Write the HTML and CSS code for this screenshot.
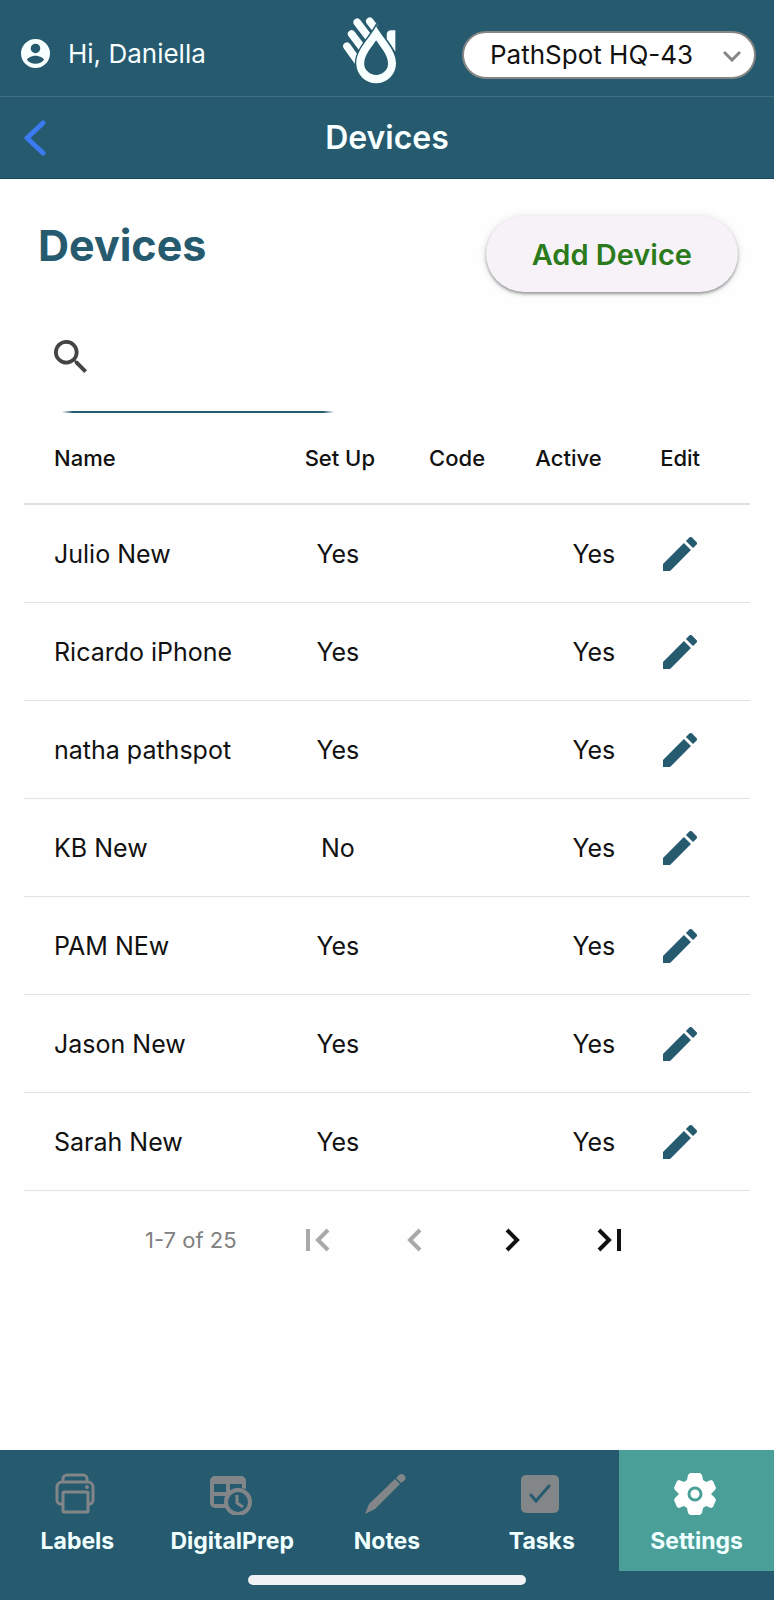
FILE: index.html
```html
<!DOCTYPE html>
<html lang="en">
<head>
<meta charset="utf-8">
<meta name="viewport" content="width=device-width, initial-scale=1">
<title>Devices</title>
<link rel="stylesheet" href="styles.css">
</head>
<body>
<svg class="defs" aria-hidden="true">
  <symbol id="pencil" viewBox="3 3 18 18">
    <path d="M3 17.25V21h3.75L17.81 9.94l-3.75-3.75L3 17.25zM20.71 7.04a1 1 0 0 0 0-1.41l-2.34-2.34a1 1 0 0 0-1.41 0l-1.83 1.83 3.75 3.75 1.83-1.83z"/>
  </symbol>
</svg>
<header class="top">
  <div class="topbar">
    <div class="user">
      <svg class="avatar" viewBox="2 2 20 20" aria-hidden="true"><path d="M12 2a10 10 0 1 0 0 20 10 10 0 0 0 0-20zm0 3.2a3.3 3.3 0 1 1 0 6.6 3.3 3.3 0 0 1 0-6.600zm0 13.900c-2.400 0-4.600-1.100-5.900-2.800.7-1.600 3.800-2.700 5.900-2.700s5.200 1.100 5.900 2.700c-1.300 1.700-3.500 2.800-5.900 2.800z"/></svg>
      <span>Hi, Daniella</span>
    </div>
    <svg class="logo" viewBox="38 37 160 200" role="img" aria-label="PathSpot">
      <g class="fingers">
        <path d="M81 52L116 98M119 49L132 66M64 87L98 132M50 124L84 172"/>
      </g>
      <path class="fill" d="M170 90q0-14 14-14h12v65q-10-16-26-38z"/>
      <path class="cut" d="M138 64C158 100 198 135 198 176a60 60 0 0 1-120 0C78 135 118 100 138 64z"/>
      <path class="fill" fill-rule="evenodd" d="M138 64C158 100 198 135 198 176a60 60 0 0 1-120 0C78 135 118 100 138 64zM138 106C124 128 102 150 102 176a36 35 0 0 0 72 0C174 150 152 128 138 106z"/>
    </svg>
    <div class="site">
      <select class="site-select" aria-label="Location"><option>PathSpot HQ-43</option></select>
      <svg class="site-arrow" viewBox="0 0 18 12" aria-hidden="true"><path d="M1 2l8 8 8-8"/></svg>
    </div>
  </div>
  <div class="titlebar">
    <button class="back" type="button" aria-label="Back"><svg viewBox="0 0 22 36" aria-hidden="true"><path d="M19 3L3 18l16 15"/></svg></button>
    <span class="title">Devices</span>
  </div>
</header>
<main class="main">
  <div class="heading">
    <h1>Devices</h1>
    <button class="add" type="button">Add Device</button>
  </div>
  <label class="search">
    <svg viewBox="3 3 18 18" aria-hidden="true"><path d="M15.500 14h-.79l-.28-.27A6.500 6.500 0 1 0 13.730 14.430l.27.28v.79l5 4.990L20.490 19l-4.990-5zm-6 0a4.500 4.500 0 1 1 0-9 4.500 4.500 0 0 1 0 9z"/></svg>
    <input type="text" aria-label="Search devices">
  </label>
  <table class="devices">
    <colgroup><col class="c-name"><col class="c-setup"><col class="c-code"><col class="c-active"><col class="c-edit"></colgroup>
    <thead>
      <tr><th class="name">Name</th><th>Set Up</th><th class="code">Code</th><th>Active</th><th class="edit">Edit</th></tr>
    </thead>
    <tbody>
      <tr><td class="name">Julio New</td><td class="setup">Yes</td><td></td><td class="active">Yes</td><td class="edit"><button type="button" aria-label="Edit Julio New"><svg><use href="#pencil"/></svg></button></td></tr>
      <tr><td class="name">Ricardo iPhone</td><td class="setup">Yes</td><td></td><td class="active">Yes</td><td class="edit"><button type="button" aria-label="Edit Ricardo iPhone"><svg><use href="#pencil"/></svg></button></td></tr>
      <tr><td class="name">natha pathspot</td><td class="setup">Yes</td><td></td><td class="active">Yes</td><td class="edit"><button type="button" aria-label="Edit natha pathspot"><svg><use href="#pencil"/></svg></button></td></tr>
      <tr><td class="name">KB New</td><td class="setup">No</td><td></td><td class="active">Yes</td><td class="edit"><button type="button" aria-label="Edit KB New"><svg><use href="#pencil"/></svg></button></td></tr>
      <tr><td class="name">PAM NEw</td><td class="setup">Yes</td><td></td><td class="active">Yes</td><td class="edit"><button type="button" aria-label="Edit PAM NEw"><svg><use href="#pencil"/></svg></button></td></tr>
      <tr><td class="name">Jason New</td><td class="setup">Yes</td><td></td><td class="active">Yes</td><td class="edit"><button type="button" aria-label="Edit Jason New"><svg><use href="#pencil"/></svg></button></td></tr>
      <tr><td class="name">Sarah New</td><td class="setup">Yes</td><td></td><td class="active">Yes</td><td class="edit"><button type="button" aria-label="Edit Sarah New"><svg><use href="#pencil"/></svg></button></td></tr>
    </tbody>
  </table>
  <div class="pager">
    <span class="range">1-7 of 25</span>
    <div class="pages">
      <button type="button" disabled aria-label="First page"><svg viewBox="0 0 24 24"><path d="M2 1v22M22 2L12 12l10 10"/></svg></button>
      <button type="button" disabled aria-label="Previous page"><svg viewBox="0 0 24 24"><path d="M17 2L7 12l10 10"/></svg></button>
      <button type="button" aria-label="Next page"><svg viewBox="0 0 24 24"><path d="M7 2l10 10L7 22"/></svg></button>
      <button type="button" aria-label="Last page"><svg viewBox="0 0 24 24"><path d="M2 2l10 10L2 22M22 1v22"/></svg></button>
    </div>
  </div>
</main>
<footer class="footer">
  <nav class="tabs">
    <a class="tab" href="#labels">
      <svg viewBox="0 0 42 42" aria-hidden="true"><g class="line"><path d="M8 31H6a4 4 0 0 1-4-4V14a5 5 0 0 1 5-5h26a5 5 0 0 1 5 5v13a4 4 0 0 1-4 4h-1M8 8V6a4 4 0 0 1 4-4h16a4 4 0 0 1 4 4v2"/><rect x="8" y="19" width="25" height="20" rx="1"/></g><circle cx="32" cy="14" r="2"/></svg>
      <span>Labels</span>
    </a>
    <a class="tab" href="#prep">
      <svg viewBox="0 0 42 42" aria-hidden="true"><path fill-rule="evenodd" d="M5 3h26a5 5 0 0 1 5 5v8a13 13 0 0 0-15 19H5a5 5 0 0 1-5-5V8a5 5 0 0 1 5-5zM4 11v8h12v-8zM20 11v8h1q4-5 11-4v-4zM4 23v8h11q0-4 1-8z"/><circle class="clock" cx="28" cy="29" r="12"/><path class="line" d="M27 22v8l6 4"/></svg>
      <span>DigitalPrep</span>
    </a>
    <a class="tab" href="#notes">
      <svg viewBox="0 0 42 42" aria-hidden="true"><path d="M1 41l4-10L31 6l5 5L11 36zM32 5l3-3a4 4 0 0 1 6 5l-4 3z"/></svg>
      <span>Notes</span>
    </a>
    <a class="tab" href="#tasks">
      <svg viewBox="0 0 42 42" aria-hidden="true"><rect x="2" y="2" width="38" height="38" rx="5"/><path class="tick" d="M12 22l5 6 13-15"/></svg>
      <span>Tasks</span>
    </a>
    <a class="tab current" href="#settings" aria-current="page">
      <svg viewBox="0 0 42 42" aria-hidden="true"><path d="M16 0h10l2 2 1 5 3 2 5-2 2 1 3 7-1 2-4 4 4 4 1 2-3 7-2 1-5-2-3 2-1 5-2 2H16l-2-2-1-5-3-2-5 2-2-1-3-7 1-2 4-4-4-4-1-2 3-7 2-1 5 2 3-2 1-5z"/><circle class="hub" cx="21" cy="21" r="6"/></svg>
      <span>Settings</span>
    </a>
  </nav>
  <div class="home"></div>
</footer>
</body>
</html>
```
FILE: styles.css
```css
* { box-sizing: border-box; }
body {
  margin: 0;
  min-height: 100vh;
  display: flex;
  flex-direction: column;
  background: #fefefe;
  color: #111;
  font-family: Inter, "Liberation Sans", sans-serif;
  font-size: 26px;
}
button { border: 0; padding: 0; background: none; font: inherit; color: inherit; }
svg { display: block; fill: currentColor; }
.defs { position: absolute; width: 0; height: 0; }

.top { background: #265a6e; color: #f7ffff; }
.topbar {
  display: flex;
  align-items: center;
  height: 97px;
  padding: 5px 18px 0 21px;
  border-bottom: 1px solid #3f7083;
}
.user { display: flex; align-items: center; gap: 18px; flex: 1; padding-top: 6px; }
.avatar { width: 29px; height: 29px; }
.logo { width: 53px; height: 67px; margin-right: 66px; }
.fill { fill: #f7ffff; }
.cut { fill: #265a6e; stroke: #265a6e; stroke-width: 9; }
.fingers { fill: none; stroke: #f7ffff; stroke-width: 23; stroke-linecap: round; }
.site { position: relative; width: 40%; max-width: 294px; margin-top: 8px; }
.site-select {
  display: block;
  appearance: none;
  width: 100%;
  height: 48px;
  padding: 0 48px 0 26px;
  border: 2px solid #858585;
  border-radius: 24px;
  background: #fff;
  color: #111;
  font: inherit;
}
.site-arrow {
  position: absolute;
  right: 15px;
  top: 19px;
  width: 18px;
  height: 12px;
  fill: none;
  stroke: #858585;
  stroke-width: 3;
  pointer-events: none;
}
.titlebar {
  display: grid;
  grid-template-columns: 1fr auto 1fr;
  align-items: center;
  height: 82px;
  padding: 0 24px;
  border-bottom: 1px solid #17495c;
}
.back { justify-self: start; }
.back svg { width: 22px; height: 36px; fill: none; stroke: #3b7af0; stroke-width: 5; stroke-linecap: round; stroke-linejoin: round; }
.title { font-size: 32px; font-weight: 600; }

.main { flex: 1; padding: 37px 24px 0; }
.heading { display: flex; justify-content: space-between; padding: 0 12px 0 14px; }
h1 { margin: 0; color: #265a6e; font-size: 43px; line-height: 58px; font-weight: 700; }
.add {
  height: 76px;
  padding: 0 46px;
  border-radius: 38px;
  background: #f6f2f8;
  box-shadow: 0 2px 3px rgba(0, 0, 0, .35), 0 1px 8px rgba(0, 0, 0, .12);
  color: #2b7a1b;
  font-size: 29px;
  font-weight: 600;
}
.search {
  display: block;
  width: 272px;
  margin: 48px 0 0 30px;
}
.search svg { width: 34px; height: 34px; color: #444; }
.search input {
  display: block;
  width: 100%;
  height: 39px;
  margin-left: 8px;
  border: 0;
  background: linear-gradient(to right, transparent, #265a6e 4%, #265a6e 96%, transparent) bottom / 100% 2px no-repeat;
  outline: 0;
  font: inherit;
}
.devices { width: 100%; table-layout: fixed; border-collapse: separate; border-spacing: 0; }
.c-name { width: 35%; }
.c-setup { width: 17%; }
.c-code { width: 16%; }
.c-active { width: 14%; }
.c-edit { width: 18%; }
th, td { padding: 0; text-align: center; white-space: nowrap; }
th { height: 92px; border-bottom: 2px solid #e0e0e0; font-size: 22px; font-weight: 500; }
td { height: 98px; border-bottom: 1px solid #e2e2e2; font-size: 25px; }
th.name, td.name { padding-left: 30px; text-align: left; }
th.code { padding-right: 5px; }
td.setup { padding-right: 4px; }
td.active { padding-right: 4px; text-align: right; }
th.edit, td.edit { padding-right: 9px; }
td.edit button { display: block; margin: 0 auto; color: #265a6e; }
td.edit svg { width: 34px; height: 34px; }

.pager { display: flex; align-items: center; height: 98px; padding-left: 121px; gap: 69px; }
.range { color: #808080; font-size: 22px; }
.pages { display: flex; gap: 73px; }
.pages svg { width: 24px; height: 24px; fill: none; stroke: currentColor; stroke-width: 4; }
.pages button:disabled { color: #a9a9a9; }

.footer { background: #265a6e; padding-bottom: 15px; }
.tabs { display: grid; grid-template-columns: repeat(5, 1fr); margin-bottom: 4px; }
.tab {
  display: flex;
  flex-direction: column;
  align-items: center;
  gap: 12px;
  height: 121px;
  padding-top: 23px;
  color: #828688;
  text-decoration: none;
}
.tab svg { width: 42px; height: 42px; margin-right: 3px; }
.tab span { color: #f0ffff; font-size: 23px; line-height: 28px; font-weight: 700; }
.line { fill: none; stroke: currentColor; stroke-width: 3; }
.clock { fill: #265a6e; stroke: currentColor; stroke-width: 4; }
.tick { fill: none; stroke: #265a6e; stroke-width: 3; stroke-linecap: round; }
.tab.current { background: #4aa099; color: #fff; }
.hub { stroke: #4aa099; stroke-width: 3; }
.home { width: 36%; height: 10px; margin: 0 auto; border-radius: 5px; background: #eff1f4; }
```
